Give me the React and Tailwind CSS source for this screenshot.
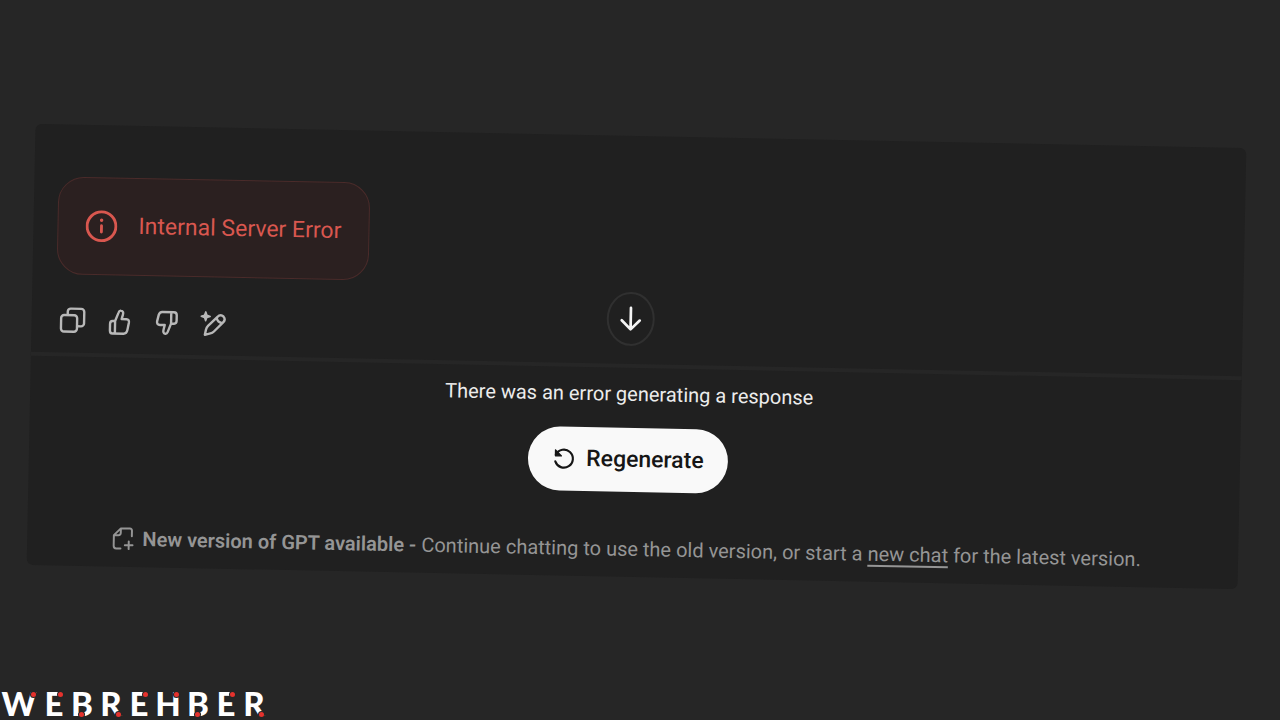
const logo = [
  { ch: "W", dot: "right-0 top-[6px]", w: "w-[34px]" },
  { ch: "E", dot: "right-0 top-[6px]", w: "w-[18px]" },
  { ch: "B", dot: "left-[7px] bottom-[3px]", w: "w-[20px]" },
  { ch: "R", dot: "right-0 bottom-[3px]", w: "w-[20px]" },
  { ch: "E", dot: "right-0 top-[6px]", w: "w-[18px]" },
  { ch: "H", dot: "right-0 top-[6px]", w: "w-[22px]" },
  { ch: "B", dot: "left-[7px] bottom-[3px]", w: "w-[20px]" },
  { ch: "E", dot: "right-0 top-[6px]", w: "w-[18px]" },
  { ch: "R", dot: "right-0 bottom-[3px]", w: "w-[20px]" },
];

function Icon({ children, className = "size-7", width = 2 }) {
  return (
    <svg
      viewBox="0 0 28 28"
      className={className}
      fill="none"
      stroke="currentColor"
      strokeWidth={width}
      strokeLinecap="round"
      strokeLinejoin="round"
      aria-hidden="true"
    >
      {children}
    </svg>
  );
}

function ActionButton({ label, children }) {
  return (
    <button type="button" aria-label={label} className="block">
      <Icon width={2.4}>{children}</Icon>
    </button>
  );
}

export default function App() {
  return (
    <div className="flex min-h-screen flex-col justify-between overflow-hidden bg-[#262626] font-['Roboto',sans-serif]">
      <main className="mr-[38px] ml-[31px] mt-[136px] rotate-[1.15deg] rounded-md bg-[#202020]">
        <section className="px-6 pt-[52px] pb-[18px]">
          <div
            role="alert"
            className="flex h-[98px] w-[312px] items-center gap-[21px] rounded-[26px] border border-[#4a2b2a] bg-[#2b2020] pl-[27px] text-[#d9574f]"
          >
            <Icon className="h-[34px] w-8" width={2.5}>
              <circle cx="14" cy="14" r="12.6" />
              <path d="M14 13.5v5.5" />
              <circle cx="14" cy="8.8" r="1.5" fill="currentColor" stroke="none" />
            </Icon>
            <p className="text-[23px] leading-7 whitespace-nowrap">Internal Server Error</p>
          </div>
          <div className="mt-[6px] grid grid-cols-[1fr_auto_1fr] items-end pr-[14px]">
            <div className="flex gap-[19px] pl-[3px] text-[#b8b8b8]">
              <ActionButton label="Copy">
                <rect x="2.5" y="8.5" width="16" height="16.5" rx="3" />
                <path d="M9 8V5a3 3 0 0 1 3-3h10.5a3 3 0 0 1 3 3v11.5a3 3 0 0 1-3 3H19" />
              </ActionButton>
              <ActionButton label="Good response">
                <path d="M9.500 13.500 12.800 5Q13.500 2.700 15.200 3c2 .3 2.600 2 2 4L16 11.500h4.800q3 0 2.500 3.500l-1.300 7q-.7 4-4 4H7q-2.500 0-2.500-3v-6.500q0-3 2.500-3h2.500v12.500" />
              </ActionButton>
              <ActionButton label="Bad response">
                <path d="M18.500 3.500V15L15.200 23.500q-.7 1.900-2.300 1.700c-1.900-.3-2.300-1.900-1.800-3.900l1.100-4.800H7.500q-3.500 0-3-3.500l1.500-6.500Q6.800 3.500 9.500 3.500H21q3 0 3 3V12q0 3-2.500 3h-3" />
              </ActionButton>
              <ActionButton label="Edit response">
                <path d="M5.500 25.500 6.500 20.500Q7 18 8.500 16.500L17.500 7.500q3.300-3.300 6.200-.7 2.800 3-.4 6.200L14.500 22q-1.500 1.500-3.500 2zM17 8.500q.8 4 5.500 5" />
                <path d="M6 2.500 7.200 5.800 10.500 7 7.200 8.200 6 11.500 4.800 8.200 1.500 7 4.800 5.800z" fill="currentColor" strokeWidth="1.500" />
              </ActionButton>
            </div>
            <button
              type="button"
              aria-label="Scroll to bottom"
              className="flex h-[54px] w-12 items-center justify-center rounded-[50%] border-2 border-[#303030] text-[#f4f4f4]"
            >
              <Icon width={2.7}>
                <path d="M14 3v21M5 15.500 14 24.500l9-9" />
              </Icon>
            </button>
          </div>
        </section>
        <hr className="border-t-4 border-[#262626]" />
        <section className="flex flex-col items-center pt-3 pr-[13px] pb-[14px]">
          <p className="text-xl leading-7 text-[#ececec]">There was an error generating a response</p>
          <button
            type="button"
            className="mt-5 flex h-16 w-[200px] items-center justify-center gap-[10px] rounded-full bg-[#f9f9f9] text-[23px] font-medium text-[#161616]"
          >
            <Icon className="size-6" width={2.5}>
              <path d="M4.500 9.500A10.500 10.500 0 1 1 4 17.500" />
              <path d="M4 4v7h7z" fill="currentColor" strokeWidth="1.500" />
            </Icon>
            Regenerate
          </button>
          <p className="mt-[43px] flex items-center gap-[7px] text-xl leading-7 whitespace-nowrap text-[#959595]">
            <Icon className="size-6" width={2.3}>
              <path d="M24 11V4.500q0-2.500-2.500-2.500H11L3 10v12.500q0 3 3 3h5M11 2v5q0 3-3 3H3M20.500 17v9M16 21.500h9" />
            </Icon>
            <span>
              <strong className="font-semibold">New version of GPT available -</strong> Continue chatting to use the old
              version, or start a{" "}
              <a href="#new-chat" className="underline decoration-2 underline-offset-4">
                new chat
              </a>{" "}
              for the latest version.
            </span>
          </p>
        </section>
      </main>
      <footer className="flex gap-[9px] pl-[2px] font-['Lato',sans-serif] text-[33px] leading-[34px] font-black text-white">
        {logo.map(({ ch, dot, w }, i) => (
          <span key={i} className={`relative flex justify-center ${w}`}>
            {ch}
            <span className={`absolute size-[5px] rounded-full bg-[#e5322d] ring-1 ring-[#262626] ${dot}`} />
          </span>
        ))}
      </footer>
    </div>
  );
}
